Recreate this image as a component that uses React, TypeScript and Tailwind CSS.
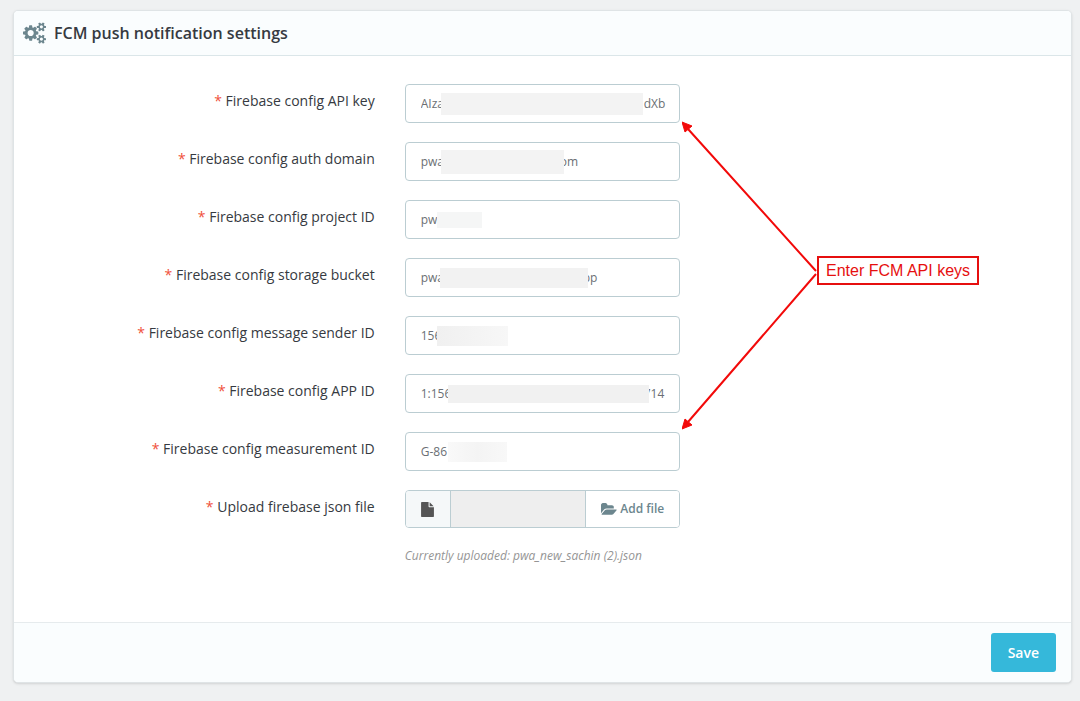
import React from "react";

interface Field {
  id: string;
  label: string;
  value: string;
  mask: string;
  tail?: string;
}

const fields: Field[] = [
  {
    id: "api-key",
    label: "Firebase config API key",
    value: "AIza",
    mask: "ml-9 mr-px h-[22px] w-[202px] bg-[#f3f3f3]",
    tail: "dXb",
  },
  {
    id: "auth-domain",
    label: "Firebase config auth domain",
    value: "pwa",
    mask: "ml-9 -mr-1 h-6 w-[123px] bg-[#f3f3f3]",
    tail: "om",
  },
  {
    id: "project-id",
    label: "Firebase config project ID",
    value: "pwa",
    mask: "ml-8 h-4 w-[45px] bg-[#f5f6f6]",
  },
  {
    id: "storage-bucket",
    label: "Firebase config storage bucket",
    value: "pwa",
    mask: "ml-[35px] -mr-[5px] h-5 w-[148px] bg-[#f2f2f2]",
    tail: "pp",
  },
  {
    id: "sender-id",
    label: "Firebase config message sender ID",
    value: "156",
    mask: "ml-8 h-5 w-[71px] bg-linear-to-r from-[#f0f0f0] to-[#f7f7f7]",
  },
  {
    id: "app-id",
    label: "Firebase config APP ID",
    value: "1:156",
    mask: "ml-[43px] -mr-[5px] h-[18px] w-[201px] bg-[#f1f1f1]",
    tail: "714",
  },
  {
    id: "measurement-id",
    label: "Firebase config measurement ID",
    value: "G-86",
    mask: "ml-[43px] h-5 w-[59px] bg-linear-to-r from-[#f9f9f9] via-[#f4f4f4] to-[#f8f8f8]",
  },
];

const CogsIcon = () => (
  <svg viewBox="0 0 1920 1792" className="h-[22px] w-[23px]" fill="currentColor" aria-hidden="true">
    <path d="M896 896q0-106-75-181t-181-75-181 75-75 181 75 181 181 75 181-75 75-181zm768 512q0-52-38-90t-90-38-90 38-38 90q0 53 37.5 90.5t90.5 37.5 90.5-37.5 37.5-90.5zm0-1024q0-52-38-90t-90-38-90 38-38 90q0 53 37.5 90.5t90.5 37.5 90.5-37.5 37.5-90.5zm-384 421v185q0 10-7 19.5t-16 10.5l-155 24q-11 35-32 76 34 48 90 115 7 11 7 20 0 12-7 19-23 30-82.5 89.5t-78.5 59.5q-11 0-21-7l-115-90q-37 19-77 31-11 108-23 155-7 24-30 24h-186q-11 0-20-7.5t-10-17.5l-23-153q-34-10-75-31l-118 89q-7 7-20 7-11 0-21-8-144-133-144-160 0-9 7-19 10-14 41-53t47-61q-23-44-35-82l-152-24q-10-1-17-9.5t-7-19.5v-185q0-10 7-19.5t16-10.5l155-24q11-35 32-76-34-48-90-115-7-11-7-20 0-12 7-20 22-30 82-89t79-59q11 0 21 7l115 90q34-18 77-32 11-108 23-154 7-24 30-24h186q11 0 20 7.5t10 17.5l23 153q34 10 75 31l118-89q8-7 20-7 11 0 21 8 144 133 144 160 0 8-7 19-12 16-42 54t-45 60q23 48 34 82l152 23q10 2 17 10.5t7 19.5zm640 533v140q0 16-149 31-12 27-30 52 51 113 51 138 0 4-4 7-122 71-124 71-8 0-46-47t-52-68q-20 2-30 2t-30-2q-14 21-52 68t-46 47q-2 0-124-71-4-3-4-7 0-25 51-138-18-25-30-52-149-15-149-31v-140q0-16 149-31 13-29 30-52-51-113-51-138 0-4 4-7 4-2 35-20t59-34 30-16q8 0 46 46.5t52 67.5q20-2 30-2t30 2q51-71 92-112l6-2q4 0 124 70 4 3 4 7 0 25-51 138 17 23 30 52 149 15 149 31zm0-1024v140q0 16-149 31-12 27-30 52 51 113 51 138 0 4-4 7-122 71-124 71-8 0-46-47t-52-68q-20 2-30 2t-30-2q-14 21-52 68t-46 47q-2 0-124-71-4-3-4-7 0-25 51-138-18-25-30-52-149-15-149-31v-140q0-16 149-31 13-29 30-52-51-113-51-138 0-4 4-7 4-2 35-20t59-34 30-16q8 0 46 46.5t52 67.5q20-2 30-2t30 2q51-71 92-112l6-2q4 0 124 70 4 3 4 7 0 25-51 138 17 23 30 52 149 15 149 31z" />
  </svg>
);

const FileIcon = () => (
  <svg viewBox="0 0 1792 1792" className="size-[15px]" fill="currentColor" aria-hidden="true">
    <path d="M1152 512v-472q22 14 36 28l408 408q14 14 28 36h-472zm-128 32q0 40 28 68t68 28h544v1056q0 40-28 68t-68 28h-1344q-40 0-68-28t-28-68v-1600q0-40 28-68t68-28h800v544z" />
  </svg>
);

const FolderOpenIcon = () => (
  <svg viewBox="0 0 1920 1792" className="h-[15px] w-4" fill="currentColor" aria-hidden="true">
    <path d="M1879 952q0 31-31 66l-336 396q-43 51-120.5 86.5t-143.5 35.5h-1088q-34 0-60.5-13t-26.5-43q0-31 31-66l336-396q43-51 120.5-86.5t143.5-35.5h1088q34 0 60.5 13t26.5 43zm-343-344v160h-832q-94 0-197 47.5t-164 119.5l-337 396-5 6q0-4-.5-12.5t-.5-12.5v-960q0-92 66-158t158-66h320q92 0 158 66t66 158v32h544q92 0 158 66t66 158z" />
  </svg>
);

const FieldLabel = ({ id, text }: { id: string; text: string }) => (
  <label htmlFor={id} className="pt-[7px] text-right text-sm text-[#363a41]">
    <span className="text-[#f0503a]">*</span> {text}
  </label>
);

const FormField = ({ id, label, value, mask, tail }: Field) => (
  <div className="grid grid-cols-[72fr_55fr_72fr] gap-x-[30px]">
    <FieldLabel id={id} text={label} />
    <div className="relative">
      <input
        id={id}
        type="text"
        defaultValue={value}
        className="h-[39px] w-full rounded-[4px] border border-[#bbcdd2] bg-white px-[15px] text-xs text-[#6b6f74] outline-none"
      />
      <div className="pointer-events-none absolute inset-y-0 left-0 right-[15px] flex items-center">
        <span className={`relative z-10 shrink-0 ${mask}`} />
        {tail && <span className="text-xs text-[#6b6f74]">{tail}</span>}
      </div>
    </div>
  </div>
);

const Annotation = () => (
  <div className="pointer-events-none absolute left-[668px] top-[65px] flex items-start">
    <svg viewBox="0 0 135 310" className="h-[310px] w-[135px]" stroke="#f20a0a" fill="#f20a0a">
      <path d="M134 150L6 8M134 153L6 301" strokeWidth="2" fill="none" />
      <path d="M0 1L10 5L3 11ZM0 308L3 298L10 304Z" strokeWidth="1" />
    </svg>
    <p className="mt-[135px] border-2 border-[#e60f0f] bg-white px-[7px] font-['Liberation_Sans',sans-serif] text-base leading-[25px] text-[#e60f0f]">
      Enter FCM API keys
    </p>
  </div>
);

export default function App() {
  return (
    <main className="min-h-screen bg-[#eff1f2] pt-[10px] pr-2 pb-[18px] pl-[13px] font-['Open_Sans',sans-serif]">
      <form
        className="overflow-hidden rounded-[5px] border border-[#dfe4e6] bg-white shadow-sm"
        onSubmit={(e) => e.preventDefault()}
      >
        <header className="flex h-[45px] items-center gap-2 border-b border-[#dbe6e9] bg-[#fafdfe] px-[9px] text-[#6c868e]">
          <CogsIcon />
          <h1 className="text-base font-semibold text-[#363a41]">FCM push notification settings</h1>
        </header>

        <div className="relative pt-7 pb-[57px]">
          <div className="flex flex-col gap-[19px]">
            {fields.map((field) => (
              <FormField key={field.id} {...field} />
            ))}
            <div className="grid grid-cols-[72fr_55fr_72fr] gap-x-[30px]">
              <FieldLabel id="json-file" text="Upload firebase json file" />
              <div className="min-w-0">
                <div className="flex h-[38px] overflow-hidden rounded-[4px] border border-[#bbcdd2]">
                  <span className="flex w-[45px] shrink-0 items-center justify-center border-r border-[#bbcdd2] bg-[#f5f8f9] text-[#555]">
                    <FileIcon />
                  </span>
                  <input
                    id="json-file"
                    type="text"
                    readOnly
                    className="min-w-0 flex-1 bg-[#eee] px-2 text-xs outline-none"
                  />
                  <button
                    type="button"
                    className="flex shrink-0 items-center gap-[3px] border-l border-[#bbcdd2] bg-white px-[15px] text-xs font-semibold text-[#6c868e]"
                  >
                    <FolderOpenIcon />
                    Add file
                  </button>
                </div>
                <p className="mt-[19px] text-xs leading-[18px] whitespace-nowrap text-[#959595] italic">
                  Currently uploaded: pwa_new_sachin (2).json
                </p>
              </div>
            </div>
          </div>
          <Annotation />
        </div>

        <footer className="flex justify-end border-t border-[#e6ebed] bg-[#fafdfe] px-[15px] py-[10px]">
          <button
            type="submit"
            className="h-[39px] rounded-[3px] bg-[#35b8da] px-[17px] text-sm font-semibold text-white"
          >
            Save
          </button>
        </footer>
      </form>
    </main>
  );
}
